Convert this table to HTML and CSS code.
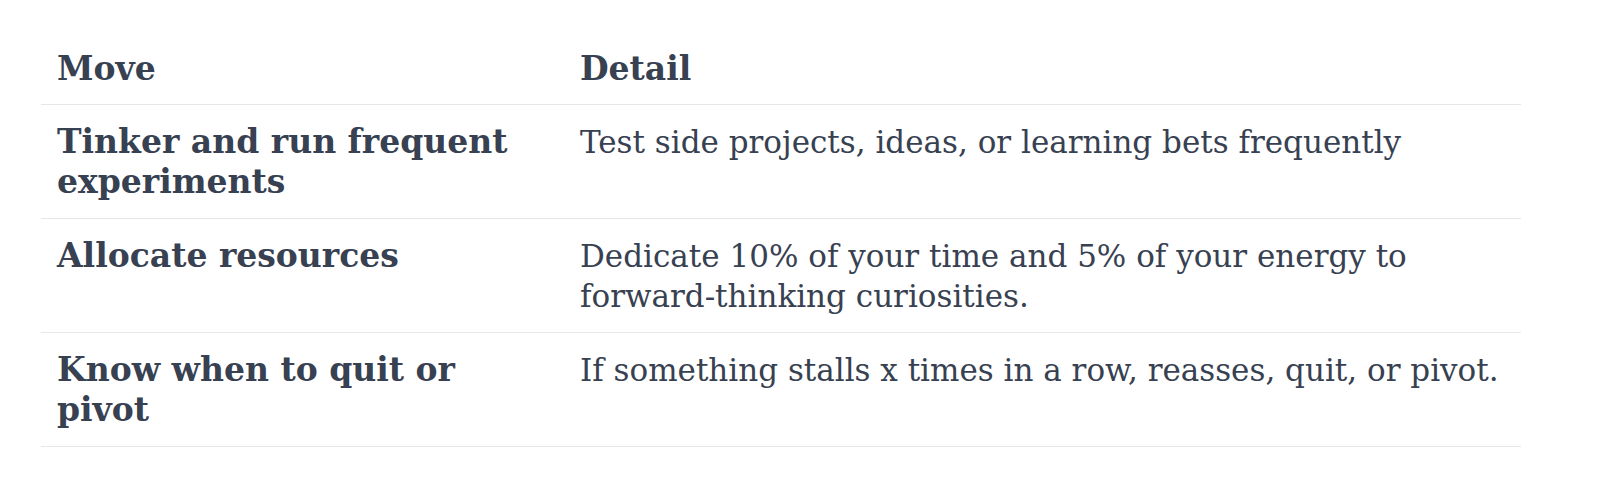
FILE: index.html
```html
<!DOCTYPE html>
<html lang="en">
<head>
<meta charset="utf-8">
<title>Moves</title>
<link rel="stylesheet" href="styles.css">
</head>
<body>
<div class="page">
  <table class="moves">
    <colgroup>
      <col class="col-move">
      <col class="col-detail">
    </colgroup>
    <thead>
      <tr>
        <th>Move</th>
        <th>Detail</th>
      </tr>
    </thead>
    <tbody>
      <tr>
        <td class="move">Tinker and run frequent experiments</td>
        <td>Test side projects, ideas, or learning bets frequently</td>
      </tr>
      <tr>
        <td class="move">Allocate resources</td>
        <td>Dedicate 10% of your time and 5% of your energy to forward-thinking curiosities.</td>
      </tr>
      <tr>
        <td class="move">Know when to quit or pivot</td>
        <td>If something stalls x times in a row, reasses, quit, or pivot.</td>
      </tr>
    </tbody>
  </table>
</div>
</body>
</html>
```

FILE: styles.css
```css
html, body {
  margin: 0;
  padding: 0;
  background: #ffffff;
}

.page {
  padding: 49px 0 0 41px;
  font-family: "DejaVu Serif", "Liberation Serif", serif;
  color: #374151;
}

.moves {
  width: 1480px;
  border-collapse: collapse;
  table-layout: fixed;
  font-size: 31px;
  line-height: 40px;
}

.col-move {
  width: 523px;
}

.moves th {
  text-align: left;
  font-weight: 700;
  font-size: 33px;
  padding: 0 16px 15px 16px;
  border-bottom: 1px solid #e5e7eb;
  vertical-align: bottom;
}

.moves td {
  padding: 17px 16px 16px 16px;
  vertical-align: top;
  border-bottom: 1px solid #e5e7eb;
}

.moves td.move {
  font-weight: 700;
  font-size: 33px;
  padding-right: 48px;
}
```
